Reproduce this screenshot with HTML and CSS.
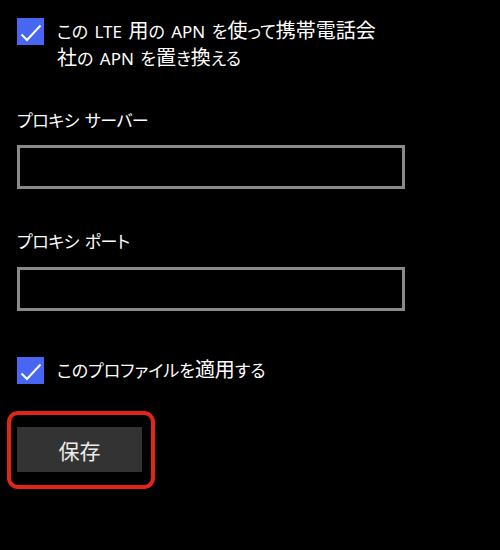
FILE: index.html
```html
<!DOCTYPE html>
<html lang="ja">
<head>
<meta charset="utf-8">
<link rel="stylesheet" href="styles.css">
</head>
<body>
<div class="page">
  <div class="check-row">
    <span class="checkbox"><svg viewBox="0 0 27 27" width="27" height="27"><path d="M4.5 16.5 L10 22 L23.5 7.5" fill="none" stroke="#fff" stroke-width="2"/></svg></span>
    <span class="check-text">この LTE <span class="k">用</span>の APN を<span class="k">使</span>って<span class="k">携帯電話会</span><br><span class="k">社</span>の APN を<span class="k">置</span>き<span class="k">換</span>える</span>
  </div>
  <div class="label label-first">プロキシ サーバー</div>
  <div class="field"></div>
  <div class="label label-second">プロキシ ポート</div>
  <div class="field field-second"></div>
  <div class="check-row check-row-second">
    <span class="checkbox"><svg viewBox="0 0 27 27" width="27" height="27"><path d="M4.5 16.5 L10 22 L23.5 7.5" fill="none" stroke="#fff" stroke-width="2"/></svg></span>
    <span class="check-text">このプロファイルを<span class="k">適用</span>する</span>
  </div>
  <div class="highlight">
    <button class="save">保存</button>
  </div>
</div>
</body>
</html>
```
FILE: styles.css
```css
html, body {
  margin: 0;
  padding: 0;
  background: #000;
}
body {
  width: 500px;
  height: 550px;
  overflow: hidden;
  font-family: "Noto Sans", "Noto Sans CJK JP", sans-serif;
  color: #fff;
  font-feature-settings: "palt";
}
.page {
  display: flex;
  flex-direction: column;
  align-items: flex-start;
  padding: 18px 0 0 17px;
}
.check-row {
  display: flex;
  align-items: flex-start;
  gap: 13px;
}
.checkbox {
  flex: none;
  width: 27px;
  height: 27px;
  background: #4767f2;
  display: block;
}
.checkbox svg {
  display: block;
}
.check-text {
  font-size: 17px;
  line-height: 27px;
  word-spacing: 2px;
}
.k {
  font-size: 20px;
  line-height: 1;
}
.label {
  font-size: 17px;
  line-height: 26px;
  letter-spacing: -0.5px;
  word-spacing: 2px;
}
.label-first {
  margin-top: 36px;
}
.label-second {
  margin-top: 40px;
}
.field {
  box-sizing: border-box;
  width: 388px;
  height: 44px;
  border: 3px solid #8a8a8a;
  margin-top: 11px;
}
.field-second {
  margin-top: 12px;
}
.check-row-second {
  margin-top: 46px;
}
.highlight {
  margin: 27px 0 0 -10px;
  border: 4px solid #e3241b;
  border-radius: 11px;
  padding: 12px 9px 13px 6px;
}
.save {
  display: block;
  width: 125px;
  height: 45px;
  border: none;
  background: #333;
  color: #ececec;
  font-family: "Noto Sans CJK JP", sans-serif;
  font-size: 21px;
  padding: 0;
}
```
